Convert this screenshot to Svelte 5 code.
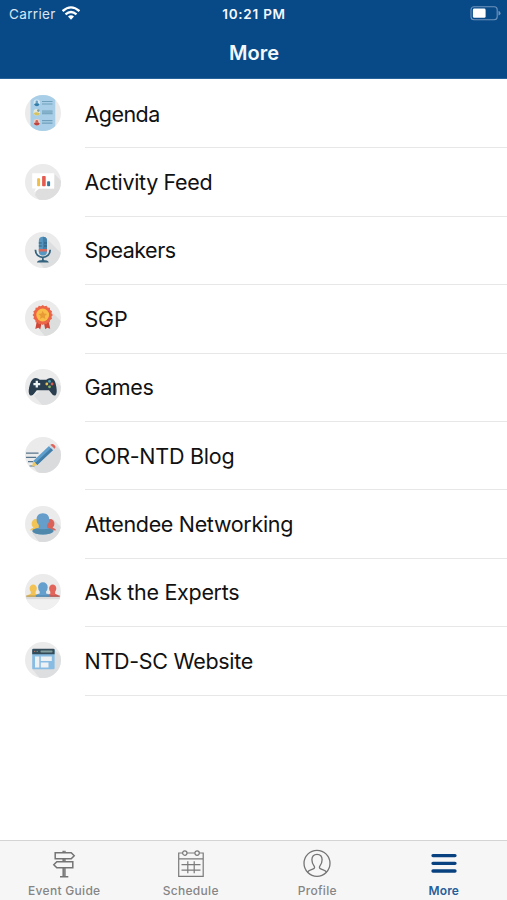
<script>
  const items = [
    { id: 'agenda', label: 'Agenda', ls: -0.55 },
    { id: 'activity', label: 'Activity Feed', ls: -0.35 },
    { id: 'speakers', label: 'Speakers', ls: -0.5 },
    { id: 'sgp', label: 'SGP', ls: -0.2 },
    { id: 'games', label: 'Games', ls: -0.4 },
    { id: 'blog', label: 'COR-NTD Blog', ls: -0.25 },
    { id: 'network', label: 'Attendee Networking', ls: -0.33 },
    { id: 'experts', label: 'Ask the Experts', ls: -0.3 },
    { id: 'website', label: 'NTD-SC Website', ls: -0.3 }
  ];
  const burst = Array.from({ length: 32 }, (_, i) => {
    const a = (i * Math.PI) / 16;
    const r = i % 2 ? 8.9 : 10.1;
    return `${(17.7 + r * Math.cos(a)).toFixed(2)},${(15 + r * Math.sin(a)).toFixed(2)}`;
  }).join(' ');
</script>

<div class="screen">
  <header>
    <div class="status">
      <div class="carrier">
        <span>Carrier</span>
        <svg width="18" height="14" viewBox="0 0 18 14" fill="none" stroke="#fff" stroke-width="2.3">
          <path d="M.6 5.1Q9-2.4 17.4 5.1M3.5 8.4Q9 3.6 14.500 8.400" />
          <path d="M6 10.500Q9 7.800 12 10.500L9 13.800Z" fill="#fff" stroke="none" />
        </svg>
      </div>
      <div class="time">10:21 PM</div>
      <svg class="battery" width="31" height="15" viewBox="0 0 31 15">
        <rect x="1" y=".7" width="26.200" height="13" rx="3" fill="none" stroke="#6f94bd" stroke-width="1.100" />
        <rect x="2.900" y="2.600" width="12.700" height="9.200" rx="1.400" fill="#fff" />
        <path d="M28.500 4.800q2 .8 2 2.400t-2 2.400z" fill="#6f94bd" />
      </svg>
    </div>
    <h1>More</h1>
  </header>

  <main>
    {#each items as item}
      <div class="row">
        <svg class="icon" viewBox="0 0 36 36">
          <defs><clipPath id="c-{item.id}"><circle cx="18" cy="18" r="18" /></clipPath></defs>
          <g clip-path="url(#c-{item.id})">
            <rect width="36" height="36" fill="#ebebeb" />
            {#if item.id === 'agenda'}
              <rect x="5.5" width="24.8" height="36" fill="#a8cfe7" />
              <g stroke="#6f9fbc" stroke-width="1.2">
                <path d="M17 6.5h10.5M17 9h10.5M17 16h10.5M17 18.6h10.5M17 25.7h10.5M17 28.2h10.5" />
              </g>
              <rect x="17" y="16" width="10.5" height="2.6" fill="#83b0cb" />
              <circle cx="11.8" cy="7.8" r="3.3" fill="#d5e8f2" />
              <path d="M9 9.5q.6-1.5 2.8-1.5t2.8 1.5q-.8 1.7-2.8 1.7T9 9.5" fill="#347eac" />
              <circle cx="11.8" cy="6.9" r="1.3" fill="#6da1c3" />
              <circle cx="11.8" cy="17.3" r="3.3" fill="#e4e8da" />
              <path d="M8.8 18.3q1-1.2 3-1l3.2 1q-.9 2.3-3.2 2.3t-3-2.3" fill="#d6c261" />
              <circle cx="13.4" cy="15.6" r="1.3" fill="#789eab" />
              <circle cx="11.8" cy="27.2" r="3.3" fill="#edcfc6" />
              <path d="M8.8 28.7q.8-1.4 3-1.4t3 1.4q-.9 1.8-3 1.8t-3-1.8" fill="#bd4440" />
              <circle cx="11.8" cy="26.3" r="1.3" fill="#ca6459" />
            {:else if item.id === 'activity'}
              <path d="M29.5 10L40 21v20H18l-8-10 2-6h17z" fill="#dedede" />
              <path d="M7.2 9.2h22v15.2H14.5L9 28.5l1.8-4.1H7.2z" fill="#fff" />
              <rect x="12.1" y="14.2" width="3" height="8" rx=".8" fill="#f1be49" />
              <rect x="17.1" y="12" width="3.6" height="10.2" rx=".8" fill="#e45b50" />
              <rect x="22.1" y="17.3" width="3" height="4.9" rx=".8" fill="#34789b" />
            {:else if item.id === 'speakers'}
              <path d="M21 6L40 25v15H22l-8-10z" fill="#dddedf" />
              <path d="M10.4 17.8c0 10 14.8 10 14.8 0M17.9 25v4" fill="none" stroke="#34637f" stroke-width="1.8" />
              <path d="M11.8 30.5q1-2.4 6-2.4t6 2.4z" fill="#34637f" />
              <rect x="13.8" y="4.8" width="8.2" height="18.8" rx="4.1" fill="#5796c1" />
              <path d="M17.9 4.8a4.1 4.1 0 0 1 4.1 4.1v8h-4.1z" fill="#437fa9" />
              <path d="M13.8 11h3M13.8 14h3M19 11h3M19 14h3" stroke="#315f7c" stroke-width="1" />
              <rect x="13.8" y="17" width="8.2" height="2.5" fill="#d5695d" />
            {:else if item.id === 'sgp'}
              <path d="M24 9L42 27v13H23l-9-11z" fill="#dcdddd" />
              <path d="M11.8 21l-1.5 8 3 -1.3 2 1.5 1.6-8zM23.6 21l1.6 7.8-3-1.1-2 1.5-1.6-8z" fill="#cc4639" />
              <polygon points={burst} fill="#ec6548" />
              <circle cx="17.7" cy="15" r="6.4" fill="#f8be48" />
              <path d="M17.7 10.8l1.3 2.7 3 .4-2.2 2.1.6 3-2.7-1.5-2.7 1.5.6-3-2.2-2.1 3-.4z" fill="#e79a35" />
            {:else if item.id === 'games'}
              <path d="M28 10L44 24v16H21L9 27z" fill="#dfe0e1" />
              <path d="M8.3 9.7q2-1.5 5 0l1.500 1h6.500l1.500-1q3-1.500 5 0 2.500 1.200 3.600 8.500 1 6.300-.8 8-2.400 1-4.200-2L24 21.200H11.800l-2.600 3.300q-2 3-4.300 1.700-2-1.500-.8-7.600 1.500-7.300 4.200-8.900z" fill="#293f50" />
              <path d="M11.8 11.7v6.8M8.4 15.1h6.8" stroke="#eef3f3" stroke-width="2.3" />
              <circle cx="24.5" cy="12.4" r="1.4" fill="#4fa3ba" /><circle cx="21.8" cy="15" r="1.4" fill="#ebc551" />
              <circle cx="27.1" cy="15" r="1.4" fill="#d95b4b" /><circle cx="24.5" cy="17.8" r="1.4" fill="#87b762" />
            {:else if item.id === 'blog'}
              <path d="M30.5 8.5L43 20v22H18l-9.5-12z" fill="#dadbdc" />
              <path d="M1 16.2h12.5M1 20.4h10.2M3 24.6h5.5M4.5 29h5" stroke="#57758c" stroke-width="1.2" />
              <path d="M24 9.1l4 4L12.2 28l-4-4z" fill="#5e9fce" />
              <path d="M26.2 10.9l1.9 2.2L12.2 28l-2-2z" fill="#427da8" />
              <path d="M8.2 24l4 4-5 1.6z" fill="#f0c75b" />
              <path d="M24 9.1l1.7-1.6 4 4-1.7 1.6z" fill="#cbd7df" />
              <path d="M25.4 7.8q2-1.7 4 .2t.2 3.7z" fill="#df6258" />
            {:else if item.id === 'network'}
              <path d="M28 13L44 29v12H18L7 27z" fill="#d9dbdc" />
              <ellipse cx="10.600" cy="17.800" rx="4" ry="4.700" fill="#f2c456" />
              <path d="M4.900 24.300q1-1.700 3.400-2.500l.3-3h6v6z" fill="#f2c456" />
              <ellipse cx="25.400" cy="17.800" rx="4" ry="4.700" fill="#db6259" />
              <path d="M31.300 24.300q-1-1.700-3.600-2.500l-.3-3h-6v6z" fill="#db6259" />
              <path d="M17.900 7.200c4.200 0 6.400 2.800 6.300 6.200 0 3-1.200 4.300-2.200 5.600v2.800c3.200 1 6 1.200 6.600 3.400q-2 3.200-10.700 3.200T7.300 25.200c.5-2.200 3.300-2.400 6.500-3.400V19c-1-1.300-2.200-2.600-2.200-5.600-.1-3.400 2.100-6.200 6.300-6.200z" fill="#659ecb" />
              <path d="M7.300 25q.5-1.800 4-2.600 6.600 1.500 13.200 0 3.500.8 4 2.600-2 3.400-10.600 3.400T7.300 25z" fill="#4f88aa" />
            {:else if item.id === 'experts'}
              <rect y="22.600" width="36" height="2.800" fill="#dcdcdc" />
              <rect y="25.400" width="36" height="11" fill="#f0f0f0" />
              <path d="M8.200 10.600a3.600 3.600 0 0 1 3.600 3.800q0 2-1.200 3.300v2.100l4 1.200v1.600h-13q.6-1.900 4.200-2.800v-2.100q-1.200-1.300-1.200-3.300a3.600 3.600 0 0 1 3.600-3.800z" fill="#f2c354" />
              <path d="M27.700 10.600a3.600 3.600 0 0 0-3.600 3.800q0 2 1.200 3.300v2.100l-4 1.200v1.600h13q-.6-1.900-4.200-2.800v-2.100q1.200-1.300 1.200-3.300a3.600 3.600 0 0 0-3.600-3.800z" fill="#e2655b" />
              <path d="M17.900 8.200a4.800 4.800 0 0 1 4.800 5q0 2.600-1.600 4.200v2.200q4 .8 4.700 3H10q.7-2.200 4.700-3v-2.200q-1.600-1.600-1.600-4.200a4.800 4.800 0 0 1 4.800-5z" fill="#659fcd" />
              <path d="M1.200 21.400h10v1.400h-10z" fill="#b99c55" />
              <path d="M11 21.400h13.800v1.400H11z" fill="#4d83ab" />
              <path d="M24.800 21.400h10v1.400h-10z" fill="#ad5750" />
            {:else}
              <path d="M29.500 8L42 20v20H18L7 27z" fill="#dddee0" />
              <rect x="7.200" y="7" width="22.400" height="20.300" rx="1" fill="#89bce3" />
              <path d="M7.200 12.300V8q0-1.200 1.200-1.200h20q1.200 0 1.200 1.200v4.300z" fill="#344c59" />
              <rect x="15.500" y="8.500" width="12" height="1.900" rx=".6" fill="#809c9d" />
              <circle cx="9.700" cy="9.400" r=".7" fill="#b76b64" /><circle cx="12.200" cy="9.400" r=".7" fill="#6f9c82" />
              <path d="M10 14.500h4.300V25.500H10zM15.800 14.500h11V19h-11zM15.800 20.500h7.700v5h-7.700z" fill="#edf1f3" />
            {/if}
          </g>
        </svg>
        <div class="label"><span style="letter-spacing:{item.ls}px">{item.label}</span></div>
      </div>
    {/each}
  </main>

  <nav>
    <div class="tab">
      <svg width="28" height="30" viewBox="0 0 28 30" fill="none" stroke="#747474" stroke-width="1.500">
        <path d="M5.200 3.700h16l3 3-3 3h-16zM22.800 12.700h-16l-3 3 3 3h16zM13.200 1.800v1.900M14.900 1.800v1.900M13.200 9.700v3M14.900 9.700v3M13.200 18.700v8.800M14.900 18.700v8.800M10 27.700h8.300" />
      </svg>
      <span>Event Guide</span>
    </div>
    <div class="tab">
      <svg width="28" height="30" viewBox="0 0 28 30" fill="none" stroke="#7a7a7a" stroke-width="1.200">
        <path d="M5.700 4H1.700v23.300h24.500V4h-4M10 4h7.900M1.700 9.800h24.500M4.500 15.600h19M4.500 21.200h19M10.800 12.300v12M17.200 12.300v12" />
        <circle cx="7.800" cy="4.100" r="2.200" /><circle cx="20.100" cy="4.100" r="2.200" />
      </svg>
      <span>Schedule</span>
    </div>
    <div class="tab">
      <svg width="28" height="30" viewBox="0 0 28 30" fill="none" stroke="#747474" stroke-width="1.300">
        <circle cx="14" cy="14.300" r="13" />
        <path d="M4.500 23.200c1.200-2.300 3.800-2.300 6.200-3.500 1.200-.7 1-1.900.3-2.900-1.500-2-2.100-4-2.100-6.100 0-3.500 2-5.400 5.100-5.400s5.100 1.900 5.100 5.400c0 2.100-.6 4.100-2.100 6.100-.7 1-.9 2.200.3 2.900 2.400 1.200 5 1.200 6.200 3.500" />
      </svg>
      <span>Profile</span>
    </div>
    <div class="tab active">
      <svg width="28" height="30" viewBox="0 0 28 30" stroke="#07417f" stroke-width="3.300" stroke-linecap="round">
        <path d="M3 6.600h22M3 14.300h22M3 22h22" />
      </svg>
      <span>More</span>
    </div>
  </nav>
</div>

<style>
  :global(body) { margin: 0; background: #fff; }
  .screen {
    width: 507px; height: 900px; display: flex; flex-direction: column;
    overflow: hidden; background: #fff; color: #111;
    font-family: Inter, "Liberation Sans", sans-serif;
  }
  header { height: 79px; flex: none; box-sizing: border-box; background: #084a88; border-bottom: 1px solid #29639b; color: #f4f8fc; }
  .status {
    height: 27px; display: grid; grid-template-columns: 1fr auto 1fr;
    align-items: center; padding: 0 6px 0 9px; font-size: 13.500px;
  }
  .carrier { display: flex; align-items: center; gap: 6px; color: #d9e6f2; letter-spacing: .35px; }
  .carrier svg { margin-top: -1px; }
  .time { font-weight: 600; letter-spacing: .75px; margin-right: 2px; }
  .battery { justify-self: end; }
  h1 { margin: 12px 0 0 1px; text-align: center; font-size: 20px; line-height: 28px; font-weight: 600; }
  main { flex: 1; }
  .row { height: 68.400px; display: flex; align-items: center; padding-left: 24.500px; }
  .icon { width: 36px; height: 36px; flex: none; }
  .label {
    flex: 1; height: 100%; margin-left: 24px; box-sizing: border-box;
    display: flex; align-items: center; font-size: 21.500px; white-space: nowrap;
    padding-top: 1px; box-shadow: 0 1px #e7e7e8;
  }
  nav { height: 60px; flex: none; box-sizing: border-box; display: flex; padding-left: 1px; background: #f7f6f7; border-top: 1px solid #d5d4d5; }
  .tab { flex: 1; padding-top: 8px; display: flex; flex-direction: column; align-items: center; color: #858585; }
  .tab span { margin-top: 4px; font-size: 12px; line-height: 16px; font-weight: 500; letter-spacing: .3px; }
  .tab.active span { color: #285f99; font-weight: 600; letter-spacing: .15px; }
</style>
